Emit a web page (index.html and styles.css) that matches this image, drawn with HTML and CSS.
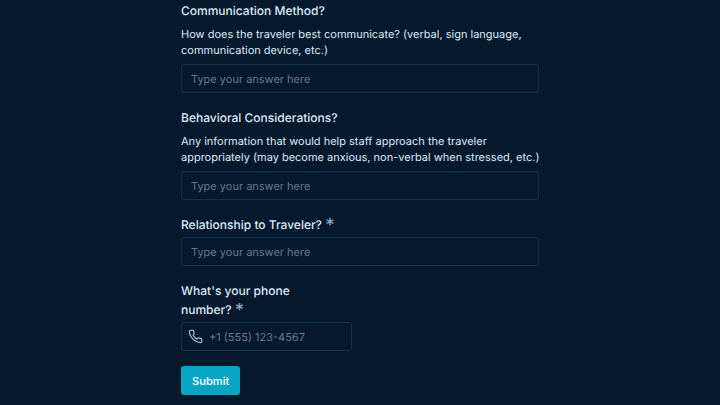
FILE: index.html
```html
<!DOCTYPE html>
<html lang="en">
<head>
    <meta charset="utf-8">
    <meta name="viewport" content="width=device-width, initial-scale=1">
    <title>Traveler Assistance</title>
    <link rel="stylesheet" href="styles.css">
</head>
<body>
    <form class="form">
        <div class="field">
            <label class="label" for="communication">Communication Method?</label>
            <p class="description" id="communication-hint">How does the traveler best communicate? (verbal, sign language, communication device, etc.)</p>
            <input class="input" type="text" id="communication" aria-describedby="communication-hint" placeholder="Type your answer here">
        </div>

        <div class="field">
            <label class="label" for="behavior">Behavioral Considerations?</label>
            <p class="description" id="behavior-hint">Any information that would help staff approach the traveler appropriately (may become anxious, non-verbal when stressed, etc.)</p>
            <input class="input" type="text" id="behavior" aria-describedby="behavior-hint" placeholder="Type your answer here">
        </div>

        <div class="field">
            <label class="label" for="relationship">Relationship to Traveler?&nbsp;<span class="required">*</span></label>
            <input class="input" type="text" id="relationship" placeholder="Type your answer here" required>
        </div>

        <div class="row">
            <div class="field">
                <label class="label" for="phone">What's your phone number?&nbsp;<span class="required">*</span></label>
                <div class="input-icon">
                    <svg class="icon" viewBox="0 0 24 24" fill="none" stroke="currentColor" stroke-width="2" stroke-linecap="round" stroke-linejoin="round" aria-hidden="true">
                        <path d="M22 16.92v3a2 2 0 0 1-2.18 2 19.79 19.79 0 0 1-8.63-3.07 19.5 19.5 0 0 1-6-6 19.79 19.79 0 0 1-3.07-8.67A2 2 0 0 1 4.11 2h3a2 2 0 0 1 2 1.72 12.84 12.84 0 0 0 .7 2.81 2 2 0 0 1-.45 2.11L8.09 9.91a16 16 0 0 0 6 6l1.27-1.27a2 2 0 0 1 2.11-.45 12.84 12.84 0 0 0 2.81.7A2 2 0 0 1 22 16.92z"/>
                    </svg>
                    <input class="input" type="tel" id="phone" placeholder="+1 (555) 123-4567" required>
                </div>
            </div>
        </div>

        <button class="submit" type="submit">Submit</button>
    </form>
</body>
</html>
```

FILE: styles.css
```css
* {
    box-sizing: border-box;
}

body {
    margin: 0;
    padding: 1px 16px 8px;
    background: #05182c;
    color: #dcebf8;
    font-family: Inter, "Liberation Sans", sans-serif;
    text-rendering: geometricPrecision;
}

.form {
    display: flex;
    flex-direction: column;
    align-items: stretch;
    gap: 15px;
    max-width: 358px;
    margin: 0 auto;
}

.field {
    display: flex;
    flex-direction: column;
}

.row {
    display: grid;
    grid-template-columns: 1fr 1fr;
    gap: 16px;
}

.label {
    margin-bottom: 3px;
    font-size: 12px;
    font-weight: 500;
    line-height: 19px;
}

.required {
    color: #8da4ba;
    font-size: 18px;
    font-weight: 500;
    line-height: 12px;
    vertical-align: -2px;
}

.description {
    margin: 3px -4px 6px 0;
    font-size: 11px;
    line-height: 16px;
}

.input {
    width: 100%;
    height: 29px;
    padding: 0 9px;
    background: transparent;
    border: 1px solid #10324a;
    border-radius: 3px;
    color: inherit;
    font-family: inherit;
    font-size: 11px;
    text-rendering: inherit;
}

.input::placeholder {
    color: #65788e;
    opacity: 1;
}

.input:focus {
    outline: none;
    border-color: #06a5c4;
}

.input-icon {
    position: relative;
}

.input-icon .input {
    padding-left: 27px;
}

.icon {
    position: absolute;
    top: 7px;
    left: 7px;
    width: 15px;
    height: 15px;
    color: #a9bdd1;
}

.submit {
    align-self: flex-start;
    height: 29px;
    padding: 0 11px;
    background: #06a5c4;
    border: none;
    border-radius: 3px;
    color: #f0fbff;
    font-family: inherit;
    font-size: 11px;
    font-weight: 600;
    text-rendering: inherit;
    cursor: pointer;
}

.submit:hover {
    background: #0891b2;
}
```
